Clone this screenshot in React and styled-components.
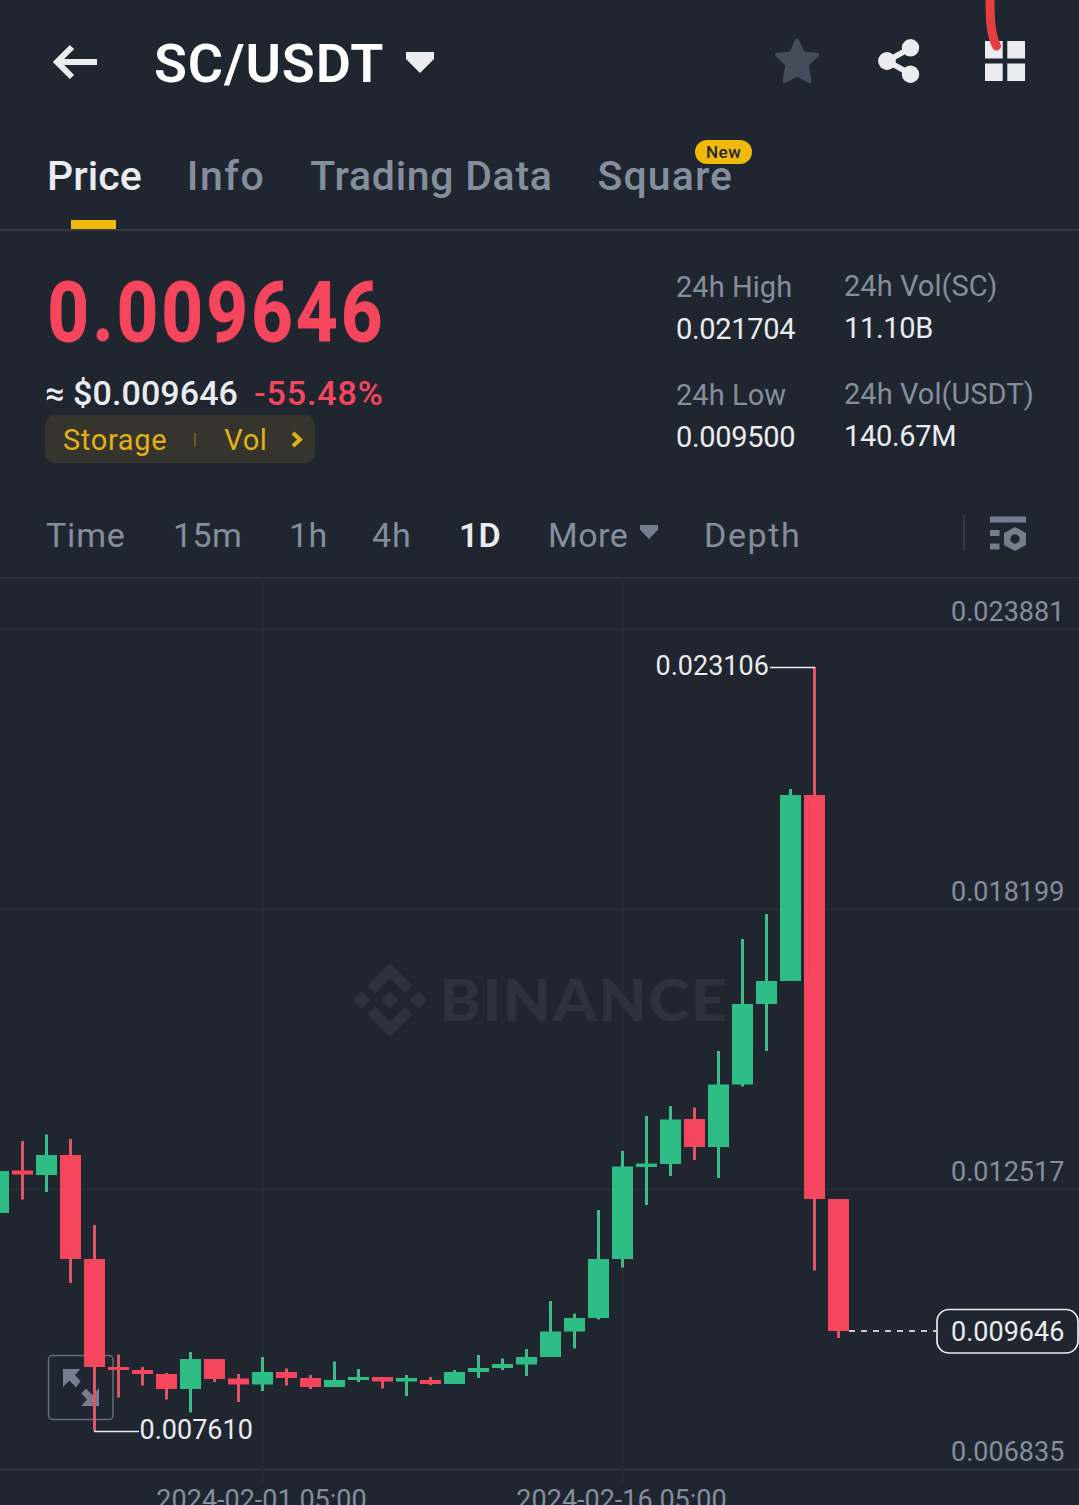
import React, { useState } from 'react';
import styled, { createGlobalStyle } from 'styled-components';

const GREEN = '#2ebd85';
const RED = '#f6465d';

const tabs = [
  { name: 'Price', spacing: 0.05 },
  { name: 'Info', spacing: 1.6 },
  { name: 'Trading Data', spacing: 0.7 },
  { name: 'Square', spacing: 1.1, badge: 'New' },
];

const periods = [
  { name: 'Time', width: 127, spacing: 0.8 },
  { name: '15m', width: 116, spacing: 0.4 },
  { name: '1h', width: 83, spacing: 0.5 },
  { name: '4h', width: 87, spacing: 1 },
  { name: '1D', width: 89, spacing: 0 },
  { name: 'More', width: 156, spacing: 0.5, caret: true },
  { name: 'Depth', width: 120, spacing: 1.6 },
];

const stats = [
  [
    { label: '24h High', value: '0.021704' },
    { label: '24h Low', value: '0.009500' },
  ],
  [
    { label: '24h Vol(SC)', value: '11.10B' },
    { label: '24h Vol(USDT)', value: '140.67M' },
  ],
];

// [up, wick top, wick bottom, body top, body bottom], one candle per day
const candles = [
  [1, 1171, 1213, 1171, 1213],
  [0, 1141, 1199.5, 1170.5, 1174.5],
  [1, 1134.5, 1192, 1155, 1175],
  [0, 1139, 1283, 1155, 1259],
  [0, 1225, 1431, 1259, 1367],
  [0, 1354.5, 1397.5, 1367, 1370],
  [0, 1367, 1385.5, 1370, 1374],
  [0, 1373, 1399.5, 1374, 1389],
  [1, 1352, 1412.5, 1359, 1389],
  [0, 1359, 1382, 1359, 1379],
  [0, 1374, 1402, 1378.5, 1384.5],
  [1, 1357, 1391, 1372, 1384.5],
  [0, 1368.5, 1385.5, 1372, 1378],
  [0, 1375, 1389, 1378, 1387],
  [1, 1361.5, 1387, 1380, 1387],
  [1, 1369, 1382, 1377, 1380],
  [0, 1377, 1388.5, 1377, 1381.5],
  [1, 1375, 1396, 1378, 1381.5],
  [0, 1377, 1385, 1380, 1384],
  [1, 1370, 1384, 1372, 1384],
  [1, 1355, 1378, 1368, 1372],
  [1, 1358.5, 1370, 1364, 1368],
  [1, 1349, 1376, 1357, 1364.5],
  [1, 1301, 1357, 1331.5, 1357],
  [1, 1313.5, 1348.5, 1318, 1331.5],
  [1, 1210, 1319.5, 1259, 1318],
  [1, 1151, 1267.5, 1166.5, 1259],
  [1, 1116, 1205, 1163.5, 1167],
  [1, 1106, 1176, 1119.5, 1164],
  [0, 1107.5, 1160, 1119, 1147],
  [1, 1051, 1178, 1084.5, 1147],
  [1, 939, 1086.5, 1004, 1084.5],
  [1, 914, 1051, 981, 1004],
  [1, 789, 981, 795, 981],
  [0, 667, 1270.5, 795, 1199],
  [0, 1199, 1338, 1199, 1331],
];

const priceAxis = [
  { y: 629, label: '0.023881' },
  { y: 909, label: '0.018199' },
  { y: 1189, label: '0.012517' },
  { y: 1469, label: '0.006835' },
];

const dateAxis = [
  { x: 262.5, label: '2024-02-01 05:00' },
  { x: 622.5, label: '2024-02-16 05:00' },
];

const Caret = ({ width, height, color }) => (
  <svg width={width} height={height} viewBox="0 0 28 21" preserveAspectRatio="none">
    <path d="M0 0H28V7L14 21L0 7Z" fill={color} />
  </svg>
);

const Header = () => (
  <HeaderBar>
    <BackIcon width="46" height="36" viewBox="0 0 46 36">
      <path d="M20 3L5 18L20 33M5 18H45" fill="none" stroke="#eaecef" strokeWidth="6" />
    </BackIcon>
    <Pair>SC/USDT</Pair>
    <Caret width={28} height={21} color="#eaecef" />
    <Actions>
      <svg width="44" height="46" viewBox="0 0 44 46">
        <path
          d="M22 2.5L27.8 15.3L42 17L31.5 26.7L34.5 43L22 36.8L9.5 43L12.5 26.7L2 17L16.2 15.3Z"
          fill="#454d5c"
          stroke="#454d5c"
          strokeWidth="4"
          strokeLinejoin="round"
        />
      </svg>
      <svg width="42" height="44" viewBox="0 0 42 44">
        <path d="M32.5 9L9 22L32.5 35" fill="none" stroke="#eaecef" strokeWidth="5.5" />
        <circle cx="32.5" cy="8.8" r="8.7" fill="#eaecef" />
        <circle cx="9" cy="22" r="8.9" fill="#eaecef" />
        <circle cx="32.5" cy="35.2" r="8.7" fill="#eaecef" />
      </svg>
      <svg width="40" height="40" viewBox="0 0 40 40">
        <path
          d="M0 0H17.7V17.6H0ZM22.3 0H40V17.6H22.3ZM0 22.4H17.7V40H0ZM22.3 22.4H40V40H22.3Z"
          fill="#eaecef"
        />
      </svg>
    </Actions>
    <MarkerStroke width="20" height="54" viewBox="0 0 20 54">
      <path
        d="M8 -4C8 18 8.5 34 14.5 46"
        fill="none"
        stroke="#e53f43"
        strokeWidth="9"
        strokeLinecap="round"
      />
    </MarkerStroke>
  </HeaderBar>
);

const Tabs = () => {
  const [active, setActive] = useState('Price');

  return (
    <TabBar>
      {tabs.map((tab) => (
        <Tab
          key={tab.name}
          $active={tab.name === active}
          $spacing={tab.spacing}
          onClick={() => setActive(tab.name)}
        >
          {tab.name}
          {tab.badge && <Badge>{tab.badge}</Badge>}
        </Tab>
      ))}
    </TabBar>
  );
};

const Ticker = () => (
  <TickerSection>
    <Quote>
      <LastPrice>0.009646</LastPrice>
      <SubPrice>
        <Fiat>≈ $0.009646</Fiat>
        <Change>-55.48%</Change>
      </SubPrice>
      <Tags>
        <Tag>Storage</Tag>
        <TagDivider />
        <Tag>Vol</Tag>
        <Chevron width="12" height="17" viewBox="0 0 12 17">
          <path d="M2 2L9 8.5L2 15" fill="none" stroke="#e3b116" strokeWidth="4" />
        </Chevron>
      </Tags>
    </Quote>
    {stats.map((column, index) => (
      <StatColumn key={index} $last={index === 1}>
        {column.map((item) => (
          <Stat key={item.label}>
            <StatLabel>{item.label}</StatLabel>
            <StatValue>{item.value}</StatValue>
          </Stat>
        ))}
      </StatColumn>
    ))}
  </TickerSection>
);

const Periods = () => {
  const [period, setPeriod] = useState('1D');

  return (
    <PeriodBar>
      {periods.map((item) => (
        <Period
          key={item.name}
          $active={item.name === period}
          $width={item.width}
          $spacing={item.spacing}
          onClick={() => setPeriod(item.name)}
        >
          {item.name}
          {item.caret && <Caret width={18} height={14} color="#757d8e" />}
        </Period>
      ))}
      <PeriodTools>
        <svg width="36" height="36" viewBox="0 0 36 36">
          <path d="M0 1.5H36V7.5H0ZM0 15H9.5V21H0ZM0 28.5H9.5V34.5H0Z" fill="#757d8e" />
          <path
            d="M25 12L36 18V30L25 36L14 30V18ZM25 19.3A4.7 4.7 0 1 0 25 28.7A4.7 4.7 0 1 0 25 19.3Z"
            fill="#757d8e"
            fillRule="evenodd"
          />
        </svg>
      </PeriodTools>
    </PeriodBar>
  );
};

const Watermark = () => (
  <g fill="#2d333e">
    <path d="M390 963L412.7 985.7L404.7 993L390 978L375.3 993L367.3 985.7Z" />
    <path d="M390 1037L412.7 1014.3L404.7 1007L390 1022L375.3 1007L367.3 1014.3Z" />
    <path d="M390 991.5L398.5 1000L390 1008.5L381.5 1000Z" />
    <path d="M361.5 991.2L370.3 1000L361.5 1008.8L352.7 1000Z" />
    <path d="M418.5 991.2L427.3 1000L418.5 1008.8L409.7 1000Z" />
    <BrandText x="439.5" y="1020.5" textLength="289" lengthAdjust="spacingAndGlyphs">
      BINANCE
    </BrandText>
  </g>
);

const Candle = ({ index, candle }) => {
  const [up, high, low, top, bottom] = candle;
  const x = index * 24 - 12;

  return (
    <g>
      <rect x={x + 9} y={high} width="3" height={low - high} fill={up ? '#42bb8a' : '#e05468'} />
      <rect x={x} y={top} width="21" height={bottom - top} fill={up ? GREEN : RED} />
    </g>
  );
};

const Chart = () => (
  <ChartSvg width="1079" height="926" viewBox="0 579 1079 926">
    {priceAxis.map(({ y }) => (
      <rect key={y} x="0" y={y - 0.5} width="1079" height="2" fill={y === 1469 ? '#303640' : '#262c36'} />
    ))}
    {dateAxis.map(({ x }) => (
      <rect key={x} x={x - 1} y="579" width="2" height="905" fill="#262c36" />
    ))}
    <Watermark />
    <rect x="48.5" y="1355.5" width="64.5" height="64" rx="4" fill="none" stroke="#646b7b" strokeWidth="1.5" />
    <path
      d="M63 1369H80.5L75 1375L80.5 1381L76 1387.500L69.500 1380.500L63 1387ZM99 1406H81L87 1399.500L81.500 1393.500L86 1388.500L92.500 1395L99 1388Z"
      fill="#757d8e"
    />
    {candles.map((candle, index) => (
      <Candle key={index} index={index} candle={candle} />
    ))}
    <path d="M770 667.5H815M94 1431.5H139" stroke="#eaecef" strokeWidth="1.5" />
    <AxisText x="655.5" y="675" $bright>
      0.023106
    </AxisText>
    <AxisText x="139.5" y="1439" $bright>
      0.007610
    </AxisText>
    <path d="M849 1331H936" stroke="#c9ccd3" strokeWidth="2" strokeDasharray="6 6" />
    <rect x="937" y="1309.5" width="141" height="43.5" rx="12" fill="#202630" stroke="#eaecef" strokeWidth="1.7" />
    <AxisText x="951" y="1341" $bright>
      0.009646
    </AxisText>
    {priceAxis.map(({ y, label }) => (
      <AxisText key={label} x="951" y={y - 8}>
        {label}
      </AxisText>
    ))}
    {dateAxis.map(({ x, label }) => (
      <AxisText key={label} x={x - 1} y="1509" textAnchor="middle">
        {label}
      </AxisText>
    ))}
  </ChartSvg>
);

const App = () => (
  <Screen>
    <GlobalStyle />
    <Header />
    <Tabs />
    <Ticker />
    <Periods />
    <Chart />
  </Screen>
);

const GlobalStyle = createGlobalStyle`
  * {
    box-sizing: border-box;
  }
  body {
    margin: 0;
    background: #202630;
  }
`;

const Screen = styled.div`
  width: 1079px;
  height: 1505px;
  overflow: hidden;
  background: #202630;
  color: #eaecef;
  font-family: Roboto, 'Liberation Sans', sans-serif;
  svg {
    flex-shrink: 0;
  }
`;

const HeaderBar = styled.header`
  position: relative;
  display: flex;
  align-items: center;
  height: 124px;
  padding: 0 54px 0 52px;
`;

const BackIcon = styled.svg`
  display: block;
`;

const Pair = styled.h1`
  width: 230px;
  margin: 3px 22px 0 56px;
  color: #fff;
  font-size: 54px;
  font-weight: 600;
  letter-spacing: 0.9px;
  white-space: nowrap;
`;

const Actions = styled.div`
  display: flex;
  align-items: center;
  margin-left: auto;
  padding-bottom: 2px;
  svg:nth-child(2) {
    margin: 0 65px 0 59px;
  }
`;

const MarkerStroke = styled.svg`
  position: absolute;
  top: 0;
  left: 982px;
`;

const TabBar = styled.nav`
  display: flex;
  gap: 45px;
  height: 107px;
  padding-left: 47px;
  border-bottom: 2px solid #333a45;
`;

const Tab = styled.div`
  position: relative;
  display: flex;
  flex-direction: column;
  align-items: center;
  padding-top: 28px;
  color: ${(props) => (props.$active ? '#eaecef' : '#848e9c')};
  font-size: 41px;
  font-weight: 500;
  line-height: 48px;
  letter-spacing: ${(props) => props.$spacing}px;
  white-space: nowrap;
  cursor: pointer;
  &::after {
    display: ${(props) => (props.$active ? 'block' : 'none')};
    width: 45px;
    height: 9px;
    margin: 20px 2px 0 0;
    background: #f0b90b;
    content: '';
  }
`;

const Badge = styled.span`
  position: absolute;
  top: 16px;
  right: -19px;
  width: 57px;
  height: 24px;
  border-radius: 12px;
  background: #f0b90b;
  color: #202630;
  font-size: 17px;
  line-height: 24px;
  letter-spacing: 0.6px;
  text-align: center;
`;

const TickerSection = styled.section`
  display: flex;
  height: 261px;
  padding: 34px 0 0 45px;
`;

const Quote = styled.div`
  width: 631px;
`;

const LastPrice = styled.div`
  height: 96px;
  padding-left: 3px;
  color: ${RED};
  font-size: 83px;
  font-weight: 700;
  line-height: 96px;
  letter-spacing: 3.9px;
  transform: scaleX(0.87);
  transform-origin: 0 50%;
  -webkit-text-stroke: 1px ${RED};
`;

const SubPrice = styled.div`
  display: flex;
  height: 54px;
  padding-top: 11px;
  font-size: 34px;
  font-weight: 500;
  line-height: 42px;
`;

const Fiat = styled.span`
  width: 209px;
  letter-spacing: 0.1px;
`;

const Change = styled.span`
  color: ${RED};
  letter-spacing: 0.9px;
`;

const Tags = styled.div`
  display: flex;
  align-items: center;
  width: 270px;
  height: 48px;
  padding: 0 12px 0 18px;
  border-radius: 10px;
  background: #35342d;
`;

const Tag = styled.span`
  padding-top: 2px;
  color: #e3b116;
  font-size: 29px;
  letter-spacing: 0.65px;
`;

const TagDivider = styled.span`
  width: 2px;
  height: 13px;
  margin: 0 28px 0 27px;
  background: #6c5a22;
`;

const Chevron = styled.svg`
  margin-left: auto;
`;

const StatColumn = styled.div`
  width: 168px;
  padding-top: ${(props) => (props.$last ? 4 : 5)}px;
`;

const Stat = styled.div`
  height: 108px;
  white-space: nowrap;
`;

const StatLabel = styled.div`
  color: #848e9c;
  font-size: 29px;
  line-height: 34px;
  letter-spacing: 0.05px;
`;

const StatValue = styled.div`
  margin-top: 8px;
  font-size: 29px;
  line-height: 34px;
  letter-spacing: -0.3px;
`;

const PeriodBar = styled.div`
  display: flex;
  align-items: center;
  height: 87px;
  padding: 0 53px 0 46px;
  border-bottom: 2px solid #2a303b;
`;

const Period = styled.div`
  display: flex;
  align-items: center;
  gap: 12px;
  width: ${(props) => props.$width}px;
  color: ${(props) => (props.$active ? '#eaecef' : '#848e9c')};
  font-size: 34px;
  font-weight: ${(props) => (props.$active ? 600 : 400)};
  letter-spacing: ${(props) => props.$spacing}px;
  cursor: pointer;
  svg {
    margin-bottom: 6px;
  }
`;

const PeriodTools = styled.div`
  display: flex;
  align-items: center;
  height: 36px;
  margin: 0 0 4px auto;
  padding-left: 25px;
  border-left: 2px solid #333a45;
`;

const ChartSvg = styled.svg`
  display: block;
`;

const AxisText = styled.text`
  fill: ${(props) => (props.$bright ? '#eaecef' : '#848e9c')};
  font-size: 27px;
`;

const BrandText = styled.text`
  font-family: Lato, sans-serif;
  font-size: 57px;
  font-weight: 900;
  letter-spacing: 1.5px;
`;

export default App;
